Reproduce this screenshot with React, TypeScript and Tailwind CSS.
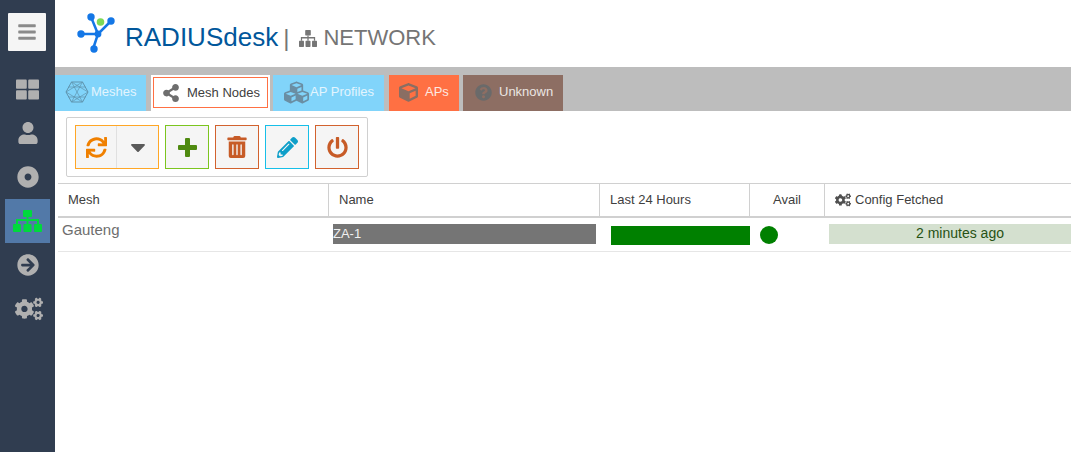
import React from 'react'
import {
  FaArrowCircleRight, FaBars, FaCaretDown, FaCogs, FaCube, FaCubes, FaDotCircle, FaPencilAlt,
  FaPowerOff, FaQuestionCircle, FaShareAlt, FaSync, FaThLarge, FaTrashAlt, FaUser,
} from 'react-icons/fa'

function Logo() {
  return (
    <svg width="40" height="42" viewBox="0 0 40 42" className="shrink-0">
      <g stroke="#1477e6" strokeWidth="2.5" fill="none">
        <path d="M15 4 L22 21 L35 8" />
        <path d="M5 21 L22 21 L17 36" />
      </g>
      <g fill="#1477e6">
        <circle cx="15" cy="4" r="3.7" />
        <circle cx="35" cy="8" r="3.7" />
        <circle cx="5" cy="21" r="3.7" />
        <circle cx="22" cy="21" r="3.4" />
        <circle cx="18" cy="36" r="3.7" />
      </g>
      <circle cx="24.5" cy="9" r="3.8" fill="#7ed957" />
    </svg>
  )
}

function MeshIcon() {
  return (
    <svg width="24" height="22" viewBox="0 0 24 22" fill="none" stroke="#5f93ad" strokeWidth="1" className="shrink-0">
      <path d="M6.5 1 H17.5 L23 11 L17.5 21 H6.5 L1 11 Z" />
      <path d="M6.5 1 L23 11 M17.5 1 L1 11 M1 11 L17.5 21 M23 11 L6.5 21 M6.5 1 L17.5 21 M17.5 1 L6.5 21 M3.5 6 H20.5 M3.5 16 H20.5" strokeWidth="0.7" />
    </svg>
  )
}

// fa4 style sitemap, the one in react-icons has smaller boxes
function Sitemap({ width, height, color }: { width: number; height: number; color: string }) {
  return (
    <svg width={width} height={height} viewBox="0 0 29 22" preserveAspectRatio="none" fill={color} className="shrink-0">
      <rect x="10" y="0" width="9" height="7" rx="1" />
      <rect x="0" y="14" width="8" height="8" rx="1" />
      <rect x="10.5" y="14" width="8" height="8" rx="1" />
      <rect x="21" y="14" width="8" height="8" rx="1" />
      <path d="M13.5 7 H15.5 V9 H26 V14 H24 V11 H15.5 V14 H13.5 V11 H5 V14 H3 V9 H13.5 Z" />
    </svg>
  )
}

function PlusIcon() {
  return (
    <svg width="19" height="19" viewBox="0 0 19 19" fill="#4f8a10">
      <path d="M7 1 Q7 0 8 0 H11 Q12 0 12 1 V7 H18 Q19 7 19 8 V11 Q19 12 18 12 H12 V18 Q12 19 11 19 H8 Q7 19 7 18 V12 H1 Q0 12 0 11 V8 Q0 7 1 7 H7 Z" />
    </svg>
  )
}

function SideItem({ children, active }: { children: React.ReactNode; active?: boolean }) {
  return (
    <div className={`flex h-[44px] w-[45px] items-center justify-center ${active ? 'bg-[#5279a8]' : ''}`}>
      {children}
    </div>
  )
}

function ToolBtn({ border, children }: { border: string; children: React.ReactNode }) {
  return <div className={`flex h-[44px] w-[44px] items-center justify-center border bg-[#f5f5f5] ${border}`}>{children}</div>
}

function Tab({ className, children }: { className: string; children: React.ReactNode }) {
  return <div className={`flex h-[36px] items-center pb-[2px] text-[13px] ${className}`}>{children}</div>
}

export default function App() {
  return (
    <div className="flex h-[452px] w-[1071px] overflow-hidden bg-white font-['Liberation_Sans',Arial,sans-serif] text-[#404040]">
      {/* Sidebar */}
      <div className="flex w-[55px] shrink-0 flex-col bg-[#303d50] pl-[5px] pt-[13px]">
        <div className="ml-[3px] flex h-[38px] w-[38px] items-center justify-center rounded-[1px] bg-[#f5f5f5]">
          <FaBars className="text-[20px] text-[#8a8a8a]" />
        </div>
        <div className="mt-[16px] flex flex-col text-[#b0b0b0]">
          <SideItem><FaThLarge className="text-[23px]" /></SideItem>
          <SideItem><FaUser className="text-[22px]" /></SideItem>
          <SideItem><FaDotCircle className="text-[22px]" /></SideItem>
          <SideItem active><Sitemap width={29} height={22} color="#00d93d" /></SideItem>
          <SideItem><FaArrowCircleRight className="text-[22px]" /></SideItem>
          <SideItem><FaCogs className="ml-[2px] text-[28px]" /></SideItem>
        </div>
      </div>

      <div className="flex min-w-0 flex-1 flex-col">
        {/* Header */}
        <div className="flex h-[67px] items-center pl-[21px]">
          <Logo />
          <span className="ml-[9px] mt-[7px] text-[26px] leading-none text-[#01579b]">RADIUSdesk</span>
          <span className="ml-[5px] mt-[9px] text-[24px] leading-none text-[#757575]">|</span>
          <span className="ml-[10px] mt-[10px]"><Sitemap width={18} height={17} color="#757575" /></span>
          <span className="ml-[6px] mt-[9px] text-[22px] leading-none text-[#757575]">NETWORK</span>
        </div>

        {/* Tabs */}
        <div className="flex h-[44px] items-end bg-[#bdbdbd]">
          <Tab className="w-[91px] bg-[#81d4fa] pl-[10px] text-[#e3f5fe]">
            <MeshIcon />
            <span className="ml-[2px]">Meshes</span>
          </Tab>
          <div className="ml-[5px] flex h-[36px] w-[119px] bg-white p-[2px] pb-[3px]">
            <div className="flex flex-1 items-center border border-[#ff7043] pl-[8px] text-[13px] text-[#404040]">
              <FaShareAlt className="text-[18px] text-[#6e6e6e]" />
              <span className="ml-[7px]">Mesh Nodes</span>
            </div>
          </div>
          <Tab className="ml-[3px] w-[111px] bg-[#81d4fa] pl-[11px] text-[#e3f5fe]">
            <FaCubes className="text-[25px] text-[#6a8ea3]" />
            <span className="ml-[1px]">AP Profiles</span>
          </Tab>
          <Tab className="ml-[5px] w-[70px] bg-[#ff7043] pl-[10px] text-[#fde8e0]">
            <FaCube className="text-[19px] text-[#8a6e63]" />
            <span className="ml-[7px]">APs</span>
          </Tab>
          <Tab className="ml-[4px] w-[100px] bg-[#8d6e63] pl-[12px] text-[#ebe5e2]">
            <FaQuestionCircle className="text-[17px] text-[#6a6a6a]" />
            <span className="ml-[7px]">Unknown</span>
          </Tab>
        </div>

        {/* Toolbar */}
        <div className="ml-[11px] mt-[6px] flex h-[60px] w-[302px] items-center gap-[6px] rounded-[2px] border border-[#d0d0d0] pl-[8px]">
          <div className="flex h-[44px] w-[84px] border border-[#ffa726] bg-[#f5f5f5]">
            <div className="flex w-[41px] items-center justify-center border-r border-[#e0e0e0] pl-[1px]">
              <FaSync className="text-[21px] text-[#f08000]" />
            </div>
            <div className="flex flex-1 items-center justify-center">
              <FaCaretDown className="text-[24px] text-[#5a5a5a]" />
            </div>
          </div>
          <ToolBtn border="border-[#7cc51f]"><PlusIcon /></ToolBtn>
          <ToolBtn border="border-[#d2622e]"><FaTrashAlt className="text-[22px] text-[#c75b27]" /></ToolBtn>
          <ToolBtn border="border-[#17bfe8]"><FaPencilAlt className="text-[21px] text-[#0e9fc9]" /></ToolBtn>
          <ToolBtn border="border-[#d2622e]"><FaPowerOff className="text-[21px] text-[#c75b27]" /></ToolBtn>
        </div>

        {/* Grid */}
        <div className="ml-[3px] mt-[6px] border-t border-[#d0d0d0] text-[13px]">
          <div className="flex h-[34px] items-center border-b-2 border-[#d0d0d0] text-[#404040]">
            <div className="flex h-full w-[271px] items-center border-r border-[#d0d0d0] pl-[10px]">Mesh</div>
            <div className="flex h-full w-[271px] items-center border-r border-[#d0d0d0] pl-[10px]">Name</div>
            <div className="flex h-full w-[150px] items-center border-r border-[#d0d0d0] pl-[10px]">Last 24 Hours</div>
            <div className="flex h-full w-[75px] items-center justify-center border-r border-[#d0d0d0]">Avail</div>
            <div className="flex h-full flex-1 items-center pl-[10px]">
              <FaCogs className="mr-[4px] text-[16px] text-[#505050]" />
              Config Fetched
            </div>
          </div>
          <div className="flex h-[34px] border-b border-[#e6e6e6]">
            <div className="w-[271px] pl-[4px] pt-[3px] text-[15px] leading-[18px] text-[#6e6e6e]">Gauteng</div>
            <div className="w-[271px] pl-[4px] pt-[6px]">
              <div className="h-[20px] w-[263px] bg-[#757575] text-[13px] leading-[20px] text-[#f0f0f0]">ZA-1</div>
            </div>
            <div className="w-[150px] pl-[11px] pt-[8px]">
              <div className="h-[19px] w-[139px] bg-[#008000]" />
            </div>
            <div className="w-[75px] pl-[10px] pt-[8px]">
              <div className="h-[18px] w-[18px] rounded-full bg-[#008000]" />
            </div>
            <div className="flex-1 pl-[4px] pt-[6px]">
              <div className="h-[20px] bg-[#d4e0cf] pl-[20px] text-center text-[14px] leading-[19px] text-[#275214]">2 minutes ago</div>
            </div>
          </div>
        </div>
      </div>
    </div>
  )
}
